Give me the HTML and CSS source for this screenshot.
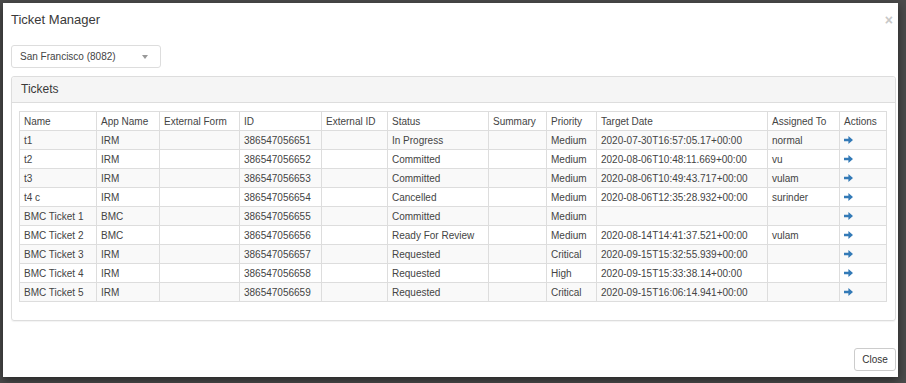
FILE: index.html
```html
<!DOCTYPE html>
<html lang="en">
<head>
    <meta charset="UTF-8">
    <title>Ticket Manager</title>
    <link rel="stylesheet" href="styles.css">
</head>
<body>

    <div class="modal">
        <div class="modal-header">
            <h4 class="modal-title">Ticket Manager</h4>
            <span class="close">&times;</span>
        </div>

        <div class="modal-body">
            <div class="site-select">
                <span>San Francisco (8082)</span>
                <span class="caret"></span>
            </div>

            <div class="panel">
                <div class="panel-heading">Tickets</div>
                <div class="panel-body">
                    <table class="tickets">
                        <colgroup>
                            <col style="width:77px">
                            <col style="width:63px">
                            <col style="width:80px">
                            <col style="width:82px">
                            <col style="width:66px">
                            <col style="width:101px">
                            <col style="width:58px">
                            <col style="width:50px">
                            <col style="width:171px">
                            <col style="width:72px">
                            <col style="width:47px">
                        </colgroup>
                        <thead>
                            <tr>
                                <th>Name</th><th>App Name</th><th>External Form</th><th>ID</th><th>External ID</th>
                                <th>Status</th><th>Summary</th><th>Priority</th><th>Target Date</th><th>Assigned To</th><th>Actions</th>
                            </tr>
                        </thead>
                        <tbody>
                            <tr><td>t1</td><td>IRM</td><td></td><td>386547056651</td><td></td><td>In Progress</td><td></td><td>Medium</td><td>2020-07-30T16:57:05.17+00:00</td><td>normal</td><td class="action"><svg class="arrow" width="9" height="8" viewBox="0 0 9 8"><path d="M0 2.8h4.4V0L9 4 4.4 8V5.2H0z"/></svg></td></tr>
                            <tr><td>t2</td><td>IRM</td><td></td><td>386547056652</td><td></td><td>Committed</td><td></td><td>Medium</td><td>2020-08-06T10:48:11.669+00:00</td><td>vu</td><td class="action"><svg class="arrow" width="9" height="8" viewBox="0 0 9 8"><path d="M0 2.8h4.4V0L9 4 4.4 8V5.2H0z"/></svg></td></tr>
                            <tr><td>t3</td><td>IRM</td><td></td><td>386547056653</td><td></td><td>Committed</td><td></td><td>Medium</td><td>2020-08-06T10:49:43.717+00:00</td><td>vulam</td><td class="action"><svg class="arrow" width="9" height="8" viewBox="0 0 9 8"><path d="M0 2.8h4.4V0L9 4 4.4 8V5.2H0z"/></svg></td></tr>
                            <tr><td>t4 c</td><td>IRM</td><td></td><td>386547056654</td><td></td><td>Cancelled</td><td></td><td>Medium</td><td>2020-08-06T12:35:28.932+00:00</td><td>surinder</td><td class="action"><svg class="arrow" width="9" height="8" viewBox="0 0 9 8"><path d="M0 2.8h4.4V0L9 4 4.4 8V5.2H0z"/></svg></td></tr>
                            <tr><td>BMC Ticket 1</td><td>BMC</td><td></td><td>386547056655</td><td></td><td>Committed</td><td></td><td>Medium</td><td></td><td></td><td class="action"><svg class="arrow" width="9" height="8" viewBox="0 0 9 8"><path d="M0 2.8h4.4V0L9 4 4.4 8V5.2H0z"/></svg></td></tr>
                            <tr><td>BMC Ticket 2</td><td>BMC</td><td></td><td>386547056656</td><td></td><td>Ready For Review</td><td></td><td>Medium</td><td>2020-08-14T14:41:37.521+00:00</td><td>vulam</td><td class="action"><svg class="arrow" width="9" height="8" viewBox="0 0 9 8"><path d="M0 2.8h4.4V0L9 4 4.4 8V5.2H0z"/></svg></td></tr>
                            <tr><td>BMC Ticket 3</td><td>IRM</td><td></td><td>386547056657</td><td></td><td>Requested</td><td></td><td>Critical</td><td>2020-09-15T15:32:55.939+00:00</td><td></td><td class="action"><svg class="arrow" width="9" height="8" viewBox="0 0 9 8"><path d="M0 2.8h4.4V0L9 4 4.4 8V5.2H0z"/></svg></td></tr>
                            <tr><td>BMC Ticket 4</td><td>IRM</td><td></td><td>386547056658</td><td></td><td>Requested</td><td></td><td>High</td><td>2020-09-15T15:33:38.14+00:00</td><td></td><td class="action"><svg class="arrow" width="9" height="8" viewBox="0 0 9 8"><path d="M0 2.8h4.4V0L9 4 4.4 8V5.2H0z"/></svg></td></tr>
                            <tr><td>BMC Ticket 5</td><td>IRM</td><td></td><td>386547056659</td><td></td><td>Requested</td><td></td><td>Critical</td><td>2020-09-15T16:06:14.941+00:00</td><td></td><td class="action"><svg class="arrow" width="9" height="8" viewBox="0 0 9 8"><path d="M0 2.8h4.4V0L9 4 4.4 8V5.2H0z"/></svg></td></tr>
                        </tbody>
                    </table>
                </div>
            </div>
        </div>

        <div class="modal-footer">
            <button type="button" class="btn-close">Close</button>
        </div>
    </div>

</body>
</html>
```

FILE: styles.css
```css
html, body {
    height: 100%;
}
body {
    margin: 0;
    background-color: #4b4b4b;
    font-family: 'Liberation Sans', Arial, sans-serif;
    color: #333;
    overflow: hidden;
}
.modal {
    box-sizing: border-box;
    width: 895px;
    height: 374px;
    margin: 3px 0 0 3px;
    background-color: #fff;
    display: flex;
    flex-direction: column;
    box-shadow: 0 3px 9px rgba(0, 0, 0, 0.5);
}
.modal-header {
    display: flex;
    justify-content: space-between;
    align-items: center;
    padding: 8px 5px 8px 8px;
}
.modal-title {
    margin: 0;
    font-size: 13px;
    font-weight: normal;
    line-height: 18px;
    color: #3a3a3a;
}
.close {
    font-size: 14px;
    font-weight: bold;
    color: #c8c8c8;
    line-height: 12px;
}
.modal-body {
    padding: 8px 2px 0 8px;
}
.site-select {
    box-sizing: border-box;
    width: 150px;
    height: 23px;
    border: 1px solid #ddd;
    border-radius: 3px;
    display: flex;
    align-items: center;
    justify-content: space-between;
    padding: 0 12px 0 8px;
    font-size: 10px;
    color: #444;
}
.caret {
    width: 0;
    height: 0;
    border-left: 3px solid transparent;
    border-right: 3px solid transparent;
    border-top: 4px solid #999;
    margin-top: 1px;
}
.panel {
    margin-top: 8px;
    border: 1px solid #ddd;
    border-radius: 3px;
    box-shadow: 0 1px 1px rgba(0, 0, 0, 0.05);
}
.panel-heading {
    background-color: #f5f5f5;
    border-bottom: 1px solid #ddd;
    height: 25px;
    line-height: 25px;
    padding-left: 9px;
    font-size: 12px;
    color: #3a3a3a;
    border-radius: 3px 3px 0 0;
}
.panel-body {
    padding: 8px 8px 18px 7px;
}
.tickets {
    width: 867px;
    table-layout: fixed;
    border-collapse: collapse;
    font-size: 10px;
    color: #444;
}
.tickets th,
.tickets td {
    border: 1px solid #ddd;
    height: 18px;
    line-height: 17px;
    padding: 0 0 0 4px;
    text-align: left;
    font-weight: normal;
    white-space: nowrap;
    overflow: hidden;
}
.tickets tbody tr:nth-child(odd) {
    background-color: #f9f9f9;
}
.arrow {
    display: block;
    fill: #337ab7;
}
.modal-footer {
    margin-top: auto;
    display: flex;
    justify-content: flex-end;
    padding: 0 2px 6px 0;
}
.btn-close {
    width: 42px;
    height: 23px;
    background-color: #fff;
    border: 1px solid #ccc;
    border-radius: 3px;
    font-family: 'Liberation Sans', Arial, sans-serif;
    font-size: 10px;
    color: #333;
    padding: 0;
}
```
